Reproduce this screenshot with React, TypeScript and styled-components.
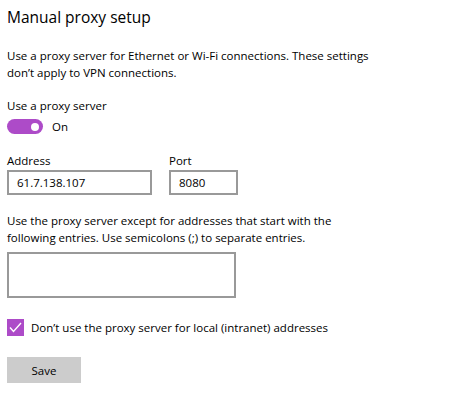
import React, { useState } from "react";
import styled, { createGlobalStyle } from "styled-components";

const GlobalStyle = createGlobalStyle`
  html, body {
    margin: 0;
    padding: 0;
    background: #fff;
  }
  body {
    font-family: "Open Sans", "Noto Sans", Arial, sans-serif;
    color: #000;
  }
`;

const ACCENT = "#ad4bc8";

const Page = styled.div`
  width: 474px;
  height: 400px;
  padding: 6px 7px 0;
  box-sizing: border-box;
  display: flex;
  flex-direction: column;
`;

const Title = styled.h1`
  margin: 0;
  font-size: 15.5px;
  font-weight: 400;
  line-height: 22px;
`;

const Text = styled.p<{ $top: number }>`
  margin: ${(p) => p.$top}px 0 0;
  font-size: 11.5px;
  line-height: 17px;
`;

const ToggleRow = styled.div`
  display: flex;
  align-items: center;
  gap: 9px;
  margin-top: 5px;
  font-size: 11.5px;
`;

const Track = styled.button<{ $on: boolean }>`
  width: 36px;
  height: 15px;
  border-radius: 8px;
  border: none;
  padding: 0;
  background: ${(p) => (p.$on ? ACCENT : "#999")};
  position: relative;
  cursor: pointer;

  &::after {
    content: "";
    position: absolute;
    top: 3.5px;
    left: ${(p) => (p.$on ? "24px" : "4px")};
    width: 8px;
    height: 8px;
    border-radius: 50%;
    background: #fff;
  }
`;

const FieldRow = styled.div`
  display: flex;
  gap: 17px;
  margin-top: 19px;
`;

const Field = styled.label`
  display: flex;
  flex-direction: column;
  font-size: 11.5px;
  line-height: 16px;
`;

const Input = styled.input<{ $w: number }>`
  width: ${(p) => p.$w}px;
  height: 25px;
  box-sizing: border-box;
  border: 2px solid #999;
  padding: 0 8px;
  margin-top: 1px;
  font: inherit;
  font-size: 11.5px;
  color: #000;
  outline: none;
`;

const Area = styled.textarea`
  width: 229px;
  height: 46px;
  box-sizing: border-box;
  border: 2px solid #999;
  margin-top: 6px;
  resize: none;
  outline: none;
`;

const CheckRow = styled.label`
  display: flex;
  align-items: center;
  gap: 7px;
  margin-top: 21px;
  font-size: 11.5px;
  cursor: pointer;
`;

const Box = styled.span<{ $checked: boolean }>`
  width: 17px;
  height: 17px;
  background: ${(p) => (p.$checked ? ACCENT : "#fff")};
  border: ${(p) => (p.$checked ? "none" : "2px solid #333")};
  box-sizing: border-box;
  display: flex;
  align-items: center;
  justify-content: center;
`;

const SaveButton = styled.button`
  width: 74px;
  height: 26px;
  margin-top: 21px;
  border: none;
  background: #cccccc;
  font: inherit;
  font-size: 11.5px;
  color: #000;
`;

export default function App() {
  const [on, setOn] = useState(true);
  const [local, setLocal] = useState(true);

  return (
    <>
      <GlobalStyle />
      <Page>
        <Title>Manual proxy setup</Title>
        <Text $top={19}>
          Use a proxy server for Ethernet or Wi-Fi connections. These settings
          <br />
          don’t apply to VPN connections.
        </Text>
        <Text $top={16}>Use a proxy server</Text>
        <ToggleRow>
          <Track $on={on} onClick={() => setOn(!on)} aria-label="Use a proxy server" />
          <span>{on ? "On" : "Off"}</span>
        </ToggleRow>
        <FieldRow>
          <Field>
            Address
            <Input $w={145} defaultValue="61.7.138.107" />
          </Field>
          <Field>
            Port
            <Input $w={69} defaultValue="8080" />
          </Field>
        </FieldRow>
        <Text $top={17}>
          Use the proxy server except for addresses that start with the
          <br />
          following entries. Use semicolons (;) to separate entries.
        </Text>
        <Area />
        <CheckRow onClick={() => setLocal(!local)}>
          <Box $checked={local}>
            {local && (
              <svg width="13" height="11" viewBox="0 0 13 11">
                <path d="M1 5.5 L4.5 9.5 L12 1" fill="none" stroke="#fff" strokeWidth="1.4" />
              </svg>
            )}
          </Box>
          Don’t use the proxy server for local (intranet) addresses
        </CheckRow>
        <SaveButton>Save</SaveButton>
      </Page>
    </>
  );
}
